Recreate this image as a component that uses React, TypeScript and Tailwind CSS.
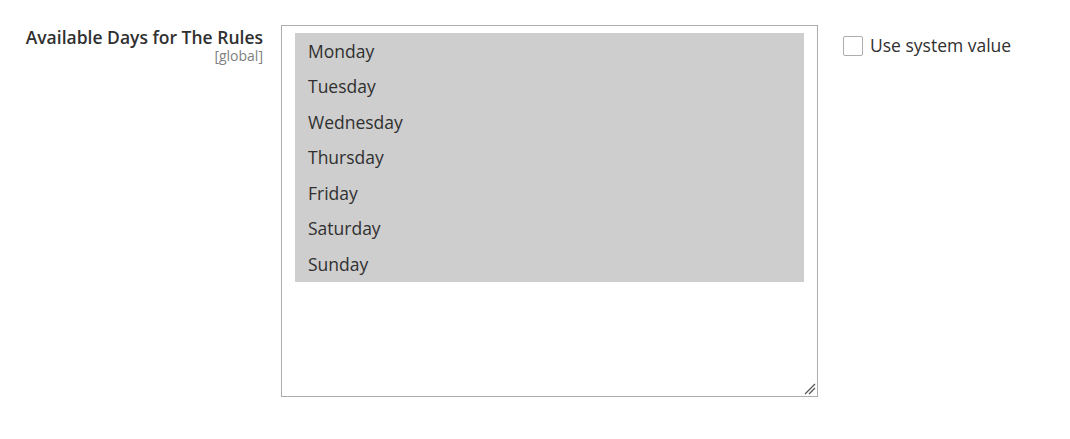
const days = ["Monday", "Tuesday", "Wednesday", "Thursday", "Friday", "Saturday", "Sunday"];

function ResizeGrip() {
  return (
    <svg
      className="absolute right-[1px] bottom-[1px]"
      width="12"
      height="12"
      viewBox="0 0 12 12"
    >
      <path d="M1 11 L11 1" stroke="#555" strokeWidth="1.2" />
      <path d="M5 11 L11 5" stroke="#555" strokeWidth="1.2" />
    </svg>
  );
}

export default function App() {
  return (
    <div
      className="h-[439px] w-[1070px] bg-white text-[#303030]"
      style={{ fontFamily: '"Open Sans", "Liberation Sans", sans-serif' }}
    >
      <div className="flex items-start pt-[25px]">
        <div className="w-[263px] shrink-0 pt-[1px] text-right">
          <div className="text-[17.5px] leading-[22px] font-semibold">
            Available Days for The Rules
          </div>
          <div className="text-[14px] leading-[16px] text-[#808080]">[global]</div>
        </div>

        <div className="relative ml-[18px] h-[372px] w-[537px] shrink-0 border border-[#adadad] px-[13px] py-[7px]">
          <ul>
            {days.map((day) => (
              <li
                key={day}
                className="flex h-[35.5px] items-center bg-[#cecece] px-[13px] text-[17.5px]"
              >
                {day}
              </li>
            ))}
          </ul>
          <ResizeGrip />
        </div>

        <label className="ml-[25px] flex items-start gap-[7px] pt-[11px] text-[17.5px]">
          <span className="block h-[20px] w-[20px] rounded-[2px] border border-[#adadad] bg-white" />
          <span className="-mt-[1px] leading-[20px]">Use system value</span>
        </label>
      </div>
    </div>
  );
}
